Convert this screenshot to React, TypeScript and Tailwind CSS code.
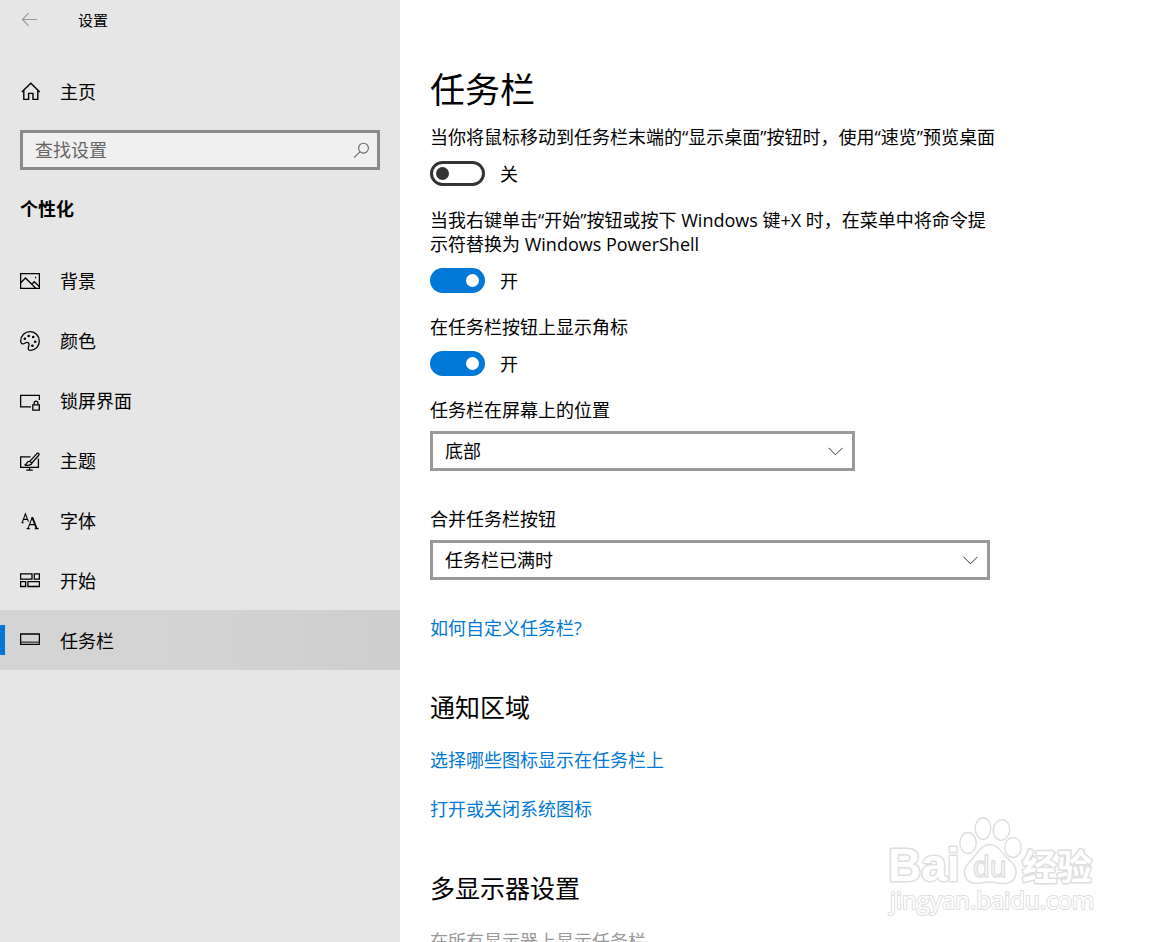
import React, { useState } from 'react';

const iconProps = {
  width: 20,
  height: 20,
  viewBox: '0 0 20 20',
  fill: 'none',
  stroke: 'currentColor',
  strokeWidth: 1.3,
  'aria-hidden': true,
};

const BackIcon = () => (
  <svg {...iconProps} strokeWidth={1.1}>
    <path d="M17 9.5H2.5M8.7 3.2L2.4 9.5L8.7 15.8" />
  </svg>
);

const HomeIcon = () => (
  <svg {...iconProps} strokeWidth={1.4}>
    <path d="M1.8 10L10.8 1.3L19.8 10" />
    <path d="M3.8 8.3V17.4H8.6V11.4H13V17.4H17.8V8.3" />
  </svg>
);

const SearchIcon = () => (
  <svg {...iconProps} strokeWidth={1.1}>
    <circle cx="11.5" cy="8.2" r="4.9" />
    <path d="M7.9 11.8L2 17.6" />
  </svg>
);

const PictureIcon = () => (
  <svg {...iconProps}>
    <path d="M.6 2.6H19.4V17.4H.6Z" />
    <path d="M.8 11.7L5.5 7L15.8 17.3M11.8 13.2L14.3 10.7L19.4 15.6" />
    <path d="M15 6.5h1.2" strokeWidth={1.4} />
  </svg>
);

const PaletteIcon = () => (
  <svg {...iconProps}>
    <path d="M.7 10C.7 4.6 5 .7 10.2 .7C15.4 .7 19.3 4.9 19.3 10C19.3 15.2 15.4 19.3 10.6 19.3C8.6 19.3 7.9 18.2 8.3 16.6C8.7 14.9 9.6 13.8 8.8 12.4C7.8 10.8 6.2 11.2 4.7 12.2C2.8 13.4 .7 12.8 .7 10Z" />
    <g fill="currentColor" stroke="none">
      <circle cx="4.8" cy="7.8" r="1.3" />
      <circle cx="8.7" cy="5" r="1.3" />
      <circle cx="13.2" cy="6" r="1.3" />
      <circle cx="15.2" cy="10.8" r="1.3" />
      <circle cx="12.4" cy="14.8" r="1.3" />
    </g>
  </svg>
);

const LockScreenIcon = () => (
  <svg {...iconProps}>
    <path d="M19.4 9V4.3H.6V15.8H11" />
    <path d="M12.8 13.8H19.3V19.2H12.8Z" />
    <path d="M14.2 13.6V12C14.2 9.4 17.9 9.4 17.9 12V13.6" />
  </svg>
);

const ThemeIcon = () => (
  <svg {...iconProps}>
    <path d="M10.5 5.9H.6V16.4H18.4V7.5M9.5 16.5V19M6.3 19.2H12.8" />
    <path d="M18.6 2.4C17.8 1.9 17 2.4 16.4 3.1L9.8 10.4L11.8 12.2L18.3 4.8C19 4 19.3 3 18.6 2.4Z" />
    <path d="M9.8 10.4C8 10.2 7.2 11.2 6.8 12.3C6.4 13.3 5.7 13.7 4.6 13.8C7.2 14.7 11.6 14.4 11.8 12.2" />
  </svg>
);

const FontIcon = () => (
  <svg {...iconProps} strokeWidth={1.1}>
    <path d="M2.2 11.6L5.4 2.8L8.4 10.6M3.4 8.4H7.4M1.4 11.8H3.6" />
    <path d="M8 17.4L12.2 6.4M9.6 13.6H15M6.6 17.6H9.8M14.8 17.6H18.6" />
    <path d="M12.2 6.2L16.6 17.4" strokeWidth={1.8} />
  </svg>
);

const StartIcon = () => (
  <svg {...iconProps}>
    <path d="M.6 2.9H12V8.2H.6ZM14.3 2.9H19.4V8.2H14.3ZM.6 10.7H5.6V15.5H.6ZM7.9 10.7H19.4V15.5H7.9Z" />
  </svg>
);

const TaskbarIcon = () => (
  <svg {...iconProps}>
    <path d="M.6 3H19.4V13.4H.6Z" />
    <path d="M1 11.2H19" strokeWidth={1.6} opacity={0.6} />
  </svg>
);

const navItems = [
  { label: '背景', icon: PictureIcon },
  { label: '颜色', icon: PaletteIcon },
  { label: '锁屏界面', icon: LockScreenIcon },
  { label: '主题', icon: ThemeIcon },
  { label: '字体', icon: FontIcon },
  { label: '开始', icon: StartIcon },
  { label: '任务栏', icon: TaskbarIcon },
];

const Sidebar: React.FC = () => {
  const [active, setActive] = useState('任务栏');

  return (
    <aside className="w-[400px] shrink-0 bg-[#e6e6e6]">
      <header className="flex h-10 items-center pl-5 text-[15px]">
        <button type="button" aria-label="返回" className="text-[#999]">
          <BackIcon />
        </button>
        <span className="ml-[38px]">设置</span>
      </header>

      <a href="#home" className="mt-8 flex h-10 items-center gap-5 px-5">
        <HomeIcon />
        主页
      </a>

      <div className="relative mx-5 mt-[18px]">
        <input
          type="text"
          aria-label="查找设置"
          placeholder="查找设置"
          className="block h-10 w-full border-[3px] border-[#8a8a8a] bg-[#f0f0f0] pr-10 pl-3 outline-none placeholder:text-[#666]"
        />
        <span className="pointer-events-none absolute inset-y-0 right-2 flex items-center text-[#666]">
          <SearchIcon />
        </span>
      </div>

      <h2 className="mt-[27px] px-5 leading-6 font-bold">个性化</h2>

      <nav className="mt-[29px]">
        {navItems.map(({ label, icon: Icon }) => (
          <button
            key={label}
            type="button"
            onClick={() => setActive(label)}
            className={
              active === label
                ? 'relative flex h-15 w-full items-center gap-5 bg-linear-to-r from-[#d4d4d4] from-40% to-[#cecece] px-5 pt-0.5'
                : 'flex h-15 w-full items-center gap-5 px-5 pt-0.5'
            }
          >
            {active === label && <span className="absolute inset-y-[15px] left-0 w-[5px] bg-[#0078d7]" />}
            <Icon />
            {label}
          </button>
        ))}
      </nav>
    </aside>
  );
};

interface ToggleProps {
  label: React.ReactNode;
  defaultOn?: boolean;
}

const Toggle: React.FC<ToggleProps> = ({ label, defaultOn = false }) => {
  const [on, setOn] = useState(defaultOn);

  return (
    <label className="block">
      <span className="block">{label}</span>
      <span className="mt-3 flex h-[25px] items-center gap-[15px]">
        <input
          type="checkbox"
          role="switch"
          checked={on}
          onChange={(e) => setOn(e.target.checked)}
          className="sr-only"
        />
        <span
          className={
            on
              ? 'flex h-full w-[55px] items-center justify-end rounded-full bg-[#0078d7] px-1.5'
              : 'flex h-full w-[55px] items-center rounded-full border-[3px] border-[#333] px-[3px]'
          }
        >
          <span className={on ? 'size-[13px] rounded-full bg-white' : 'size-[13px] rounded-full bg-[#333]'} />
        </span>
        <span>{on ? '开' : '关'}</span>
      </span>
    </label>
  );
};

interface SelectFieldProps {
  id: string;
  label: string;
  options: string[];
  defaultValue: string;
  width: string;
}

const SelectField: React.FC<SelectFieldProps> = ({ id, label, options, defaultValue, width }) => (
  <div>
    <label htmlFor={id} className="block">
      {label}
    </label>
    <div className={`relative mt-[9px] w-full ${width}`}>
      <select
        id={id}
        defaultValue={defaultValue}
        className="block h-10 w-full appearance-none border-[3px] border-[#999] bg-white pr-10 pl-3 outline-none"
      >
        {options.map((option) => (
          <option key={option}>{option}</option>
        ))}
      </select>
      <svg
        className="pointer-events-none absolute top-4 right-3"
        width="15"
        height="9"
        viewBox="0 0 15 9"
        fill="none"
        stroke="#333"
        aria-hidden
      >
        <path d="M.5 .8L7.5 7.8L14.5 .8" />
      </svg>
    </div>
  </div>
);

const Watermark = () => (
  <svg
    className="pointer-events-none absolute right-[56px] bottom-[22px]"
    width="218"
    height="106"
    viewBox="0 0 218 106"
    fill="#fff"
    stroke="#dedede"
    strokeWidth="1.4"
    strokeLinejoin="round"
    aria-hidden
  >
    <g strokeWidth="3" paintOrder="stroke" fontWeight="700">
      <text x="2" y="67" fontSize="46" fontFamily="'Liberation Sans', Arial, sans-serif">
        Bai
      </text>
      <text x="136" y="66" fontSize="35" fontFamily="'Noto Sans CJK SC', sans-serif">
        经验
      </text>
    </g>
    <ellipse cx="82" cy="29" rx="8.2" ry="10.5" />
    <ellipse cx="97" cy="14.5" rx="7.8" ry="10.8" />
    <ellipse cx="115.5" cy="16" rx="8.2" ry="10.3" transform="rotate(8 115.5 16)" />
    <ellipse cx="127" cy="33.5" rx="8.2" ry="10" />
    <path d="M104 30.5C112 30.5 115 38 121 44C127 49 131 53 130 60C128 70 119 70.5 112 69C106 67.5 102 67.5 95 69C86 70.5 79 68 78.5 58C78.5 51 84 48 88 43C93 37 96 30.5 104 30.5Z" />
    <text x="87" y="63" fontSize="30" fontFamily="'Liberation Sans', Arial, sans-serif">
      du
    </text>
    <text
      x="4"
      y="95"
      fontSize="24"
      fontFamily="'Open Sans', 'Noto Sans', sans-serif"
      strokeWidth="2"
      paintOrder="stroke"
    >
      jingyan.baidu.com
    </text>
  </svg>
);

const TaskbarSettings: React.FC = () => (
  <main className="min-w-0 flex-1 px-[30px] pt-[65px] leading-6">
    <h1 className="text-[35px] leading-[50px]">任务栏</h1>

    <div className="mt-2.5 space-y-[22px]">
      <Toggle label="当你将鼠标移动到任务栏末端的“显示桌面”按钮时&#xFF0C;使用“速览”预览桌面" />
      <Toggle
        defaultOn
        label={
          <>
            当我右键单击“开始”按钮或按下 Windows 键+X 时&#xFF0C;在菜单中将命令提
            <br />
            示符替换为 Windows PowerShell
          </>
        }
      />
      <Toggle defaultOn label="在任务栏按钮上显示角标" />
      <SelectField
        id="position"
        label="任务栏在屏幕上的位置"
        options={['靠左', '顶部', '靠右', '底部']}
        defaultValue="底部"
        width="max-w-[425px]"
      />
    </div>

    <div className="mt-9 space-y-9">
      <SelectField
        id="combine"
        label="合并任务栏按钮"
        options={['始终合并按钮', '任务栏已满时', '从不']}
        defaultValue="任务栏已满时"
        width="max-w-[560px]"
      />
      <a href="#customize" className="block text-[#0078d7]">
        如何自定义任务栏?
      </a>
    </div>

    <section className="mt-[51px] space-y-[25px]">
      <h2 className="text-[25px] leading-8">通知区域</h2>
      <a href="#icons" className="block text-[#0078d7]">
        选择哪些图标显示在任务栏上
      </a>
      <a href="#system-icons" className="block text-[#0078d7]">
        打开或关闭系统图标
      </a>
    </section>

    <section className="mt-[51px] space-y-[25px]">
      <h2 className="text-[25px] leading-8">多显示器设置</h2>
      <p className="text-[#999]">在所有显示器上显示任务栏</p>
    </section>
  </main>
);

const App: React.FC = () => (
  <div className="relative flex h-screen overflow-hidden bg-white font-['Open_Sans','Noto_Sans_CJK_SC',sans-serif] text-[18px] text-black">
    <Sidebar />
    <TaskbarSettings />
    <Watermark />
  </div>
);

export default App;
